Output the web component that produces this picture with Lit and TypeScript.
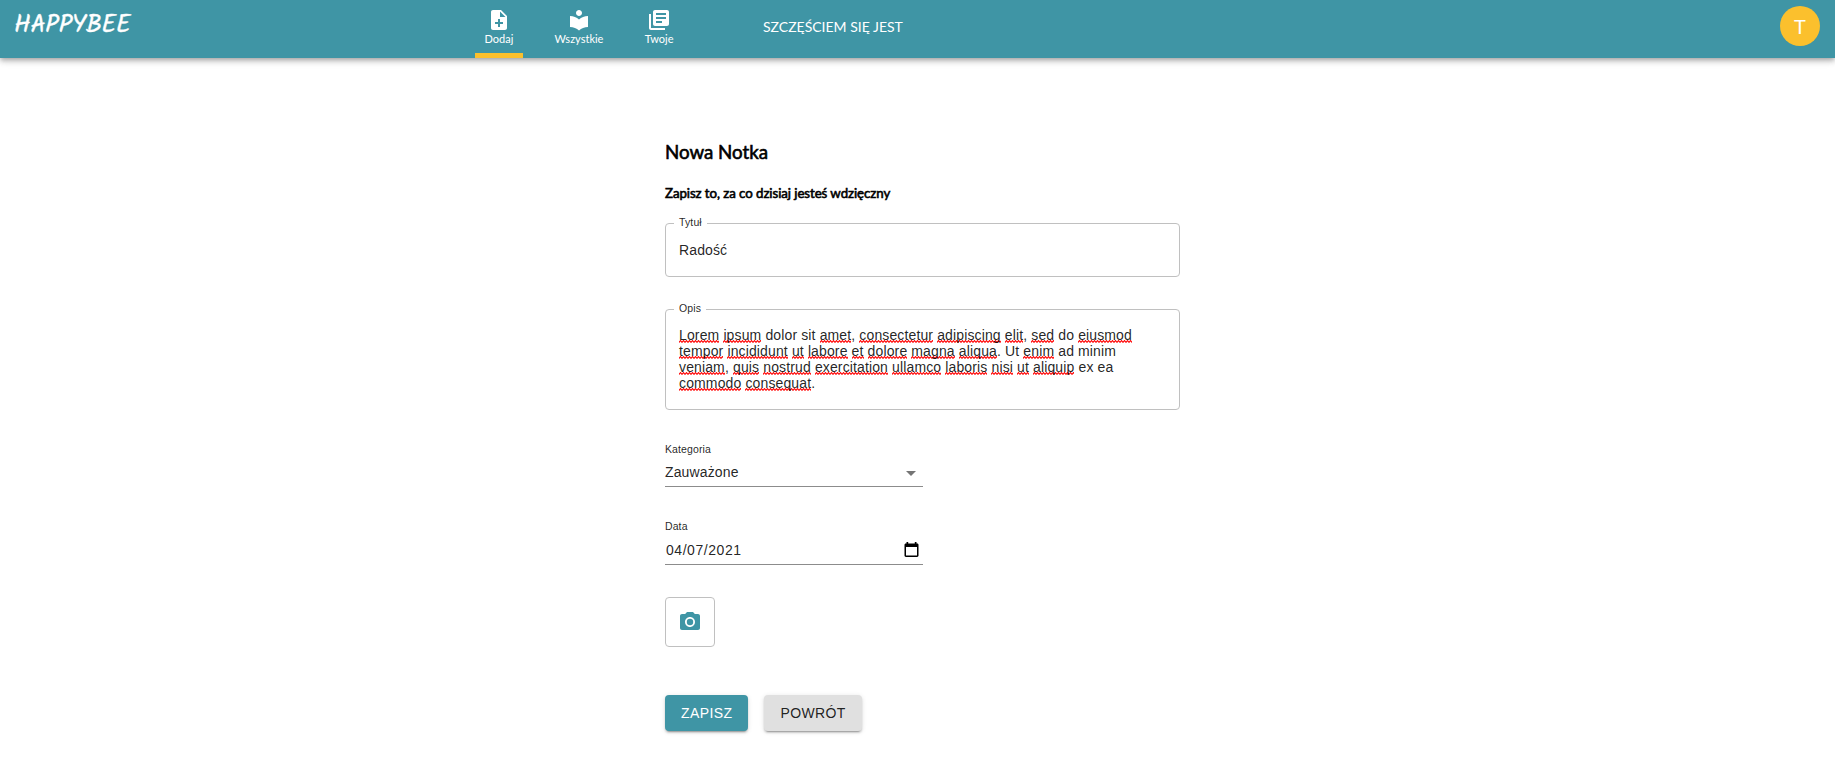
import { LitElement, html, css } from "lit";
import { customElement } from "lit/decorators.js";

const NAV = [
  {
    label: "Dodaj",
    active: true,
    icon: "M14 2H6c-1.1 0-1.99.9-1.99 2L4 20c0 1.1.89 2 1.99 2H18c1.1 0 2-.9 2-2V8l-6-6zm2 14h-3v3h-2v-3H8v-2h3v-3h2v3h3v2zm-3-7V3.5L18.5 9H13z",
  },
  {
    label: "Wszystkie",
    active: false,
    icon: "M12 11.55C9.64 9.35 6.48 8 3 8v11c3.48 0 6.64 1.35 9 3.55 2.36-2.19 5.52-3.55 9-3.55V8c-3.48 0-6.64 1.35-9 3.55zM12 8c1.66 0 3-1.34 3-3s-1.34-3-3-3-3 1.34-3 3 1.34 3 3 3z",
  },
  {
    label: "Twoje",
    active: false,
    icon: "M4 6H2v14c0 1.1.9 2 2 2h14v-2H4V6zm16-4H8c-1.1 0-2 .9-2 2v12c0 1.1.9 2 2 2h12c1.1 0 2-.9 2-2V4c0-1.1-.9-2-2-2zm-1 9H9V9h10v2zm-4 4H9v-2h6v2zm4-8H9V5h10v2z",
  },
];

// Words between underscores are flagged by the spell checker.
const LINES = [
  "_Lorem_ _ipsum_ dolor sit _amet_, _consectetur_ _adipiscing_ _elit_, _sed_ do _eiusmod_",
  "_tempor_ _incididunt_ _ut_ _labore_ _et_ _dolore_ _magna_ _aliqua_. Ut _enim_ ad minim",
  "_veniam_, _quis_ _nostrud_ _exercitation_ _ullamco_ _laboris_ _nisi_ _ut_ _aliquip_ ex ea",
  "_commodo_ _consequat_.",
];

@customElement("app-root")
export class AppRoot extends LitElement {
  static styles = css`
    :host {
      display: block;
      height: 782px;
      background: #fff;
      font-family: "Liberation Sans", Arial, sans-serif;
      color: rgba(0, 0, 0, 0.87);
    }
    * { box-sizing: border-box; }
    header {
      display: grid;
      grid-template-columns: 475px 208px 1fr auto;
      height: 58px;
      background: #3f95a5;
      color: #fff;
      font-family: Lato, sans-serif;
      box-shadow: 0 2px 4px -1px rgba(0, 0, 0, 0.2), 0 4px 5px rgba(0, 0, 0, 0.14), 0 1px 10px rgba(0, 0, 0, 0.12);
    }
    .logo {
      padding: 11px 0 0 14px;
      font-family: Kalam, cursive;
      font-size: 25px;
      line-height: 28px;
      letter-spacing: -0.3px;
      white-space: nowrap;
      -webkit-text-stroke: 0.4px #fff;
    }
    nav { display: flex; justify-content: space-between; }
    .item {
      display: flex;
      flex-direction: column;
      align-items: center;
      padding: 8px 9.5px 0;
      border-bottom: 5px solid transparent;
      font-size: 11px;
      line-height: 14px;
    }
    .item.active { border-color: #fbc02d; }
    svg { display: block; fill: currentColor; }
    .motto { padding: 17px 0 0 80px; font-size: 14px; line-height: 20px; }
    .avatar {
      display: flex;
      align-items: center;
      justify-content: center;
      width: 40px;
      height: 40px;
      margin: 6px 15px 0 0;
      border-radius: 50%;
      background: #fbc02d;
      font-size: 20px;
    }
    main { width: 515px; margin: 82px 0 0 665px; }
    h1, h2 {
      margin: 0;
      font-family: Lato, sans-serif;
      font-weight: 400;
      color: #000;
      -webkit-text-stroke: 0.6px #000;
      white-space: nowrap;
    }
    h1 { font-size: 18.72px; line-height: 24px; }
    h2 { margin-top: 20px; font-size: 13.28px; line-height: 18px; letter-spacing: -0.06px; }
    .outlined {
      position: relative;
      border: 1px solid #c0c0c0;
      border-radius: 4px;
      padding: 18px 13px;
      font-size: 14px;
      line-height: 16px;
      letter-spacing: 0.131px;
      white-space: nowrap;
    }
    .title { height: 54px; margin-top: 21px; }
    .body { height: 101px; margin-top: 32px; padding-top: 17px; }
    .legend {
      position: absolute;
      left: 8px;
      top: -9px;
      padding: 0 5px;
      background: #fff;
      font-size: 10.5px;
      line-height: 14px;
    }
    .bad {
      background: url("data:image/svg+xml,%3Csvg xmlns='http://www.w3.org/2000/svg' width='3' height='3'%3E%3Cpath d='M-1.5 .6L0 2.3L1.5 .6L3 2.3L4.5 .6' fill='none' stroke='%23f00' stroke-width='1.1'/%3E%3C/svg%3E") 0 13px / 3px 3px repeat-x;
    }
    .plain { width: 258px; border-bottom: 1px solid #8c8c8c; }
    .plain label { display: block; font-size: 10.5px; line-height: 12px; letter-spacing: 0.1px; }
    .row {
      display: flex;
      justify-content: space-between;
      align-items: center;
      font-size: 14px;
      line-height: 16px;
      letter-spacing: 0.131px;
    }
    .select { height: 44px; margin-top: 33px; }
    .select .row { margin-top: 6px; }
    .select .row span { padding-bottom: 2px; }
    .date { height: 45px; margin-top: 33px; }
    .date .row { margin-top: 10px; padding: 0 4px 0 1px; }
    .value { letter-spacing: 0.55px; }
    .arrow { fill: #757575; }
    .photo {
      display: flex;
      align-items: center;
      justify-content: center;
      width: 50px;
      height: 50px;
      margin-top: 32px;
      border: 1px solid #c0c0c0;
      border-radius: 4px;
      color: #3f95a5;
    }
    .actions { display: flex; gap: 16px; margin-top: 48px; }
    button {
      height: 36px;
      padding: 0 16px;
      border: 0;
      border-radius: 4px;
      background: #e0e0e0;
      color: rgba(0, 0, 0, 0.87);
      font: 14px/24px "Liberation Sans", Arial, sans-serif;
      letter-spacing: 0.4px;
      box-shadow: 0 3px 1px -2px rgba(0, 0, 0, 0.2), 0 2px 2px rgba(0, 0, 0, 0.14), 0 1px 5px rgba(0, 0, 0, 0.12);
    }
    .primary { background: #3f95a5; color: #fff; }
  `;

  private spell(line: string) {
    return line.split("_").map((part, i) => (i % 2 ? html`<span class="bad">${part}</span>` : part));
  }

  render() {
    return html`
      <header>
        <div class="logo">HAPPYBEE</div>
        <nav>
          ${NAV.map(
            (n) => html`<div class="item ${n.active ? "active" : ""}">
              <svg width="24" height="24" viewBox="0 0 24 24"><path d=${n.icon}></path></svg><span>${n.label}</span>
            </div>`
          )}
        </nav>
        <div class="motto">SZCZĘŚCIEM SIĘ JEST</div>
        <div class="avatar">T</div>
      </header>
      <main>
        <h1>Nowa Notka</h1>
        <h2>Zapisz to, za co dzisiaj jesteś wdzięczny</h2>
        <div class="outlined title"><span class="legend">Tytuł</span>Radość</div>
        <div class="outlined body"><span class="legend">Opis</span>${LINES.map((l) => html`<div>${this.spell(l)}</div>`)}</div>
        <div class="plain select">
          <label>Kategoria</label>
          <div class="row"><span>Zauważone</span>
            <svg class="arrow" width="24" height="24" viewBox="0 0 24 24"><path d="M7 10l5 5 5-5z"></path></svg>
          </div>
        </div>
        <div class="plain date">
          <label>Data</label>
          <div class="row"><span class="value">04/07/2021</span>
            <svg class="cal" width="15" height="16" viewBox="0 0 15 16"><path fill="#000" fill-rule="evenodd" d="M2.5 0h1.7v1.5h6.6V0h1.7v1.5h.6c.9 0 1.4.6 1.4 1.4v10.7c0 .8-.6 1.4-1.4 1.4H1.9c-.8 0-1.4-.6-1.4-1.4V2.9c0-.8.6-1.4 1.4-1.4h.6zM2 5v8.5h11V5z"></path></svg>
          </div>
        </div>
        <div class="photo">
          <svg width="24" height="24" viewBox="0 0 24 24"><path fill-rule="evenodd" d="M9 2L7.17 4H4c-1.1 0-2 .9-2 2v12c0 1.1.9 2 2 2h16c1.1 0 2-.9 2-2V6c0-1.1-.9-2-2-2h-3.17L15 2H9zm3 15c-2.76 0-5-2.24-5-5s2.24-5 5-5 5 2.24 5 5-2.24 5-5 5z"></path><circle cx="12" cy="12" r="3.2"></circle></svg>
        </div>
        <div class="actions">
          <button class="primary">ZAPISZ</button>
          <button>POWRÓT</button>
        </div>
      </main>
    `;
  }
}
